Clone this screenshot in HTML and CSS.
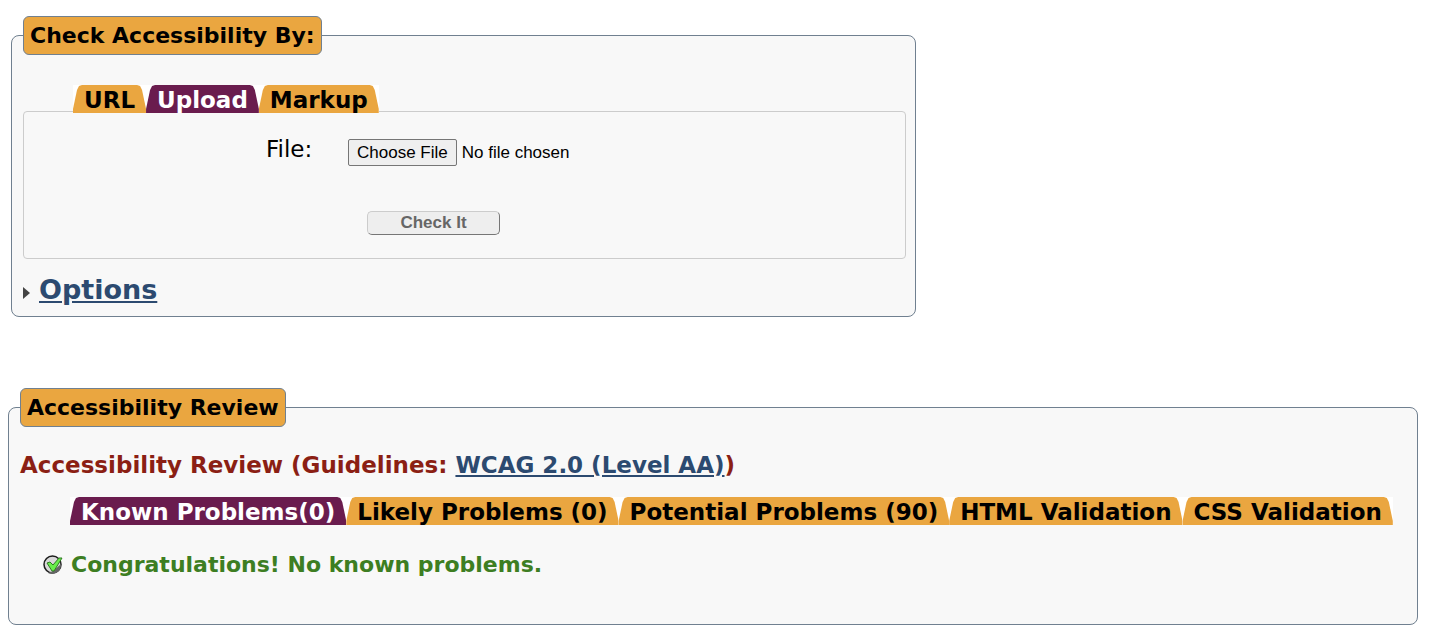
FILE: index.html
```html
<!DOCTYPE html>
<html lang="en">
<head>
<meta charset="utf-8">
<title>Accessibility Checker</title>
<link rel="stylesheet" href="styles.css">
</head>
<body>
<form class="checker">
  <fieldset class="group group-input">
    <legend class="group-title">Check Accessibility By:</legend>
    <ul class="tabs">
      <li class="tab"><a class="tab-link" href="#url">URL</a></li>
      <li class="tab"><a class="tab-link active" href="#upload">Upload</a></li>
      <li class="tab"><a class="tab-link" href="#markup">Markup</a></li>
    </ul>
    <div class="panel" id="upload">
      <div class="file-row">
        <label class="file-label" for="file">File:</label>
        <input class="file-input" type="file" id="file">
      </div>
      <button class="submit" type="submit" disabled>Check It</button>
    </div>
    <h2 class="options">
      <svg class="options-arrow" width="8" height="12" viewBox="0 0 8 12" aria-hidden="true"><path d="M0 0 7 6 0 12z" fill="#444"/></svg>
      <a class="link" href="#options">Options</a>
    </h2>
  </fieldset>
</form>

<fieldset class="group group-review">
  <legend class="group-title">Accessibility Review</legend>
  <h3 class="review-title">Accessibility Review (Guidelines: <a class="link" href="#guideline">WCAG 2.0 (Level AA)</a>)</h3>
  <ul class="tabs">
    <li class="tab"><a class="tab-link active" href="#known">Known Problems(0)</a></li>
    <li class="tab"><a class="tab-link" href="#likely">Likely Problems (0)</a></li>
    <li class="tab"><a class="tab-link" href="#potential">Potential Problems (90)</a></li>
    <li class="tab"><a class="tab-link" href="#html">HTML Validation</a></li>
    <li class="tab"><a class="tab-link" href="#css">CSS Validation</a></li>
  </ul>
  <p class="success" id="known">
    <svg width="20" height="20" viewBox="0 0 20 20" aria-hidden="true">
      <circle cx="9.500" cy="9.500" r="8.500" fill="#d8d8d8" stroke="#1c1c1c" stroke-width="1.5"/>
      <path d="M18 9a9 9 0 0 1-13 9l5-2z" fill="#666"/>
      <path d="M4 8 7 7 10 10 16 3 19 3 11 16 9 16z" fill="#69ee4b" stroke="#2f7a22" stroke-width="1" stroke-linejoin="round"/>
    </svg>
    <span>Congratulations! No known problems.</span>
  </p>
</fieldset>
</body>
</html>
```
FILE: styles.css
```css
* {
  box-sizing: border-box;
}

body {
  margin: 0;
  padding: 16px 12px 6px 8px;
  background: #fff;
  color: #000;
  font: 22px/28px Verdana, "DejaVu Sans", sans-serif;
}

.checker {
  margin: 0 0 71px 3px;
  max-width: 905px;
}

.group {
  min-width: 0;
  margin: 0;
  border: 1px solid #708090;
  border-radius: 8px;
  background: #f8f8f8;
}

.group-input {
  padding: 30px 9px 9px 11px;
}

.group-review {
  padding: 24px 11px 45px;
}

.group-title {
  padding: 5px 6px;
  border: 1px solid #708090;
  border-radius: 6px;
  background: #eaa640;
  font-weight: bold;
  line-height: 27px;
}

.tabs {
  display: flex;
  margin: 0 0 0 50px;
  padding: 0;
  list-style: none;
  font-size: 23px;
}

.tab {
  background: #fff;
}

.tab-link {
  display: block;
  height: 28px;
  padding: 0 11px;
  background: #eaa640;
  clip-path: polygon(0 100%, 0 24px, 4px 5px, 6px 1px, 9px 0, calc(100% - 9px) 0, calc(100% - 6px) 1px, calc(100% - 4px) 5px, 100% 24px, 100% 100%);
  color: #000;
  font-weight: bold;
  line-height: 30px;
  text-decoration: none;
  white-space: nowrap;
}

.tab-link.active {
  background: #6a1c4e;
  color: #fff;
}

.group-input .tabs {
  position: relative;
  z-index: 1;
  margin-bottom: -2px;
}

.panel {
  padding: 23px 20px;
  border: 1px solid #ccc;
  border-radius: 4px;
}

.file-row {
  display: grid;
  grid-template-columns: 82px 1fr;
  align-items: start;
  padding-left: 222px;
}

.file-label {
  font-size: 23px;
}

.file-input {
  margin-top: 4px;
  font: 17px "Liberation Sans", Arial, sans-serif;
}

.file-input::file-selector-button {
  height: 27px;
  margin: 0 5px 0 0;
  padding: 0 8px;
  border: 1px solid #767676;
  border-radius: 2px;
  background: #efefef;
  color: #000;
  font: inherit;
}

.submit {
  display: block;
  width: 133px;
  height: 24px;
  margin: 45px 0 0 323px;
  padding: 0;
  border: 1px solid;
  border-color: #ccc #767676 #767676 #ccc;
  border-radius: 5px;
  background: #eee;
  color: #666;
  font: bold 17px "Liberation Sans", Arial, sans-serif;
}

.options {
  display: flex;
  align-items: center;
  gap: 8px;
  margin: 13px 0 0;
  font-size: 27px;
  line-height: 35px;
}

.options-arrow {
  margin-top: 6px;
}

.link {
  color: #2c4a70;
  text-decoration: underline;
}

.review-title {
  margin: 0 0 18px;
  color: #8b1f14;
  font-size: 23px;
}

.success {
  display: flex;
  align-items: center;
  gap: 8px;
  margin: 26px 0 0 23px;
  color: #3d7e22;
  font-weight: bold;
}
```
